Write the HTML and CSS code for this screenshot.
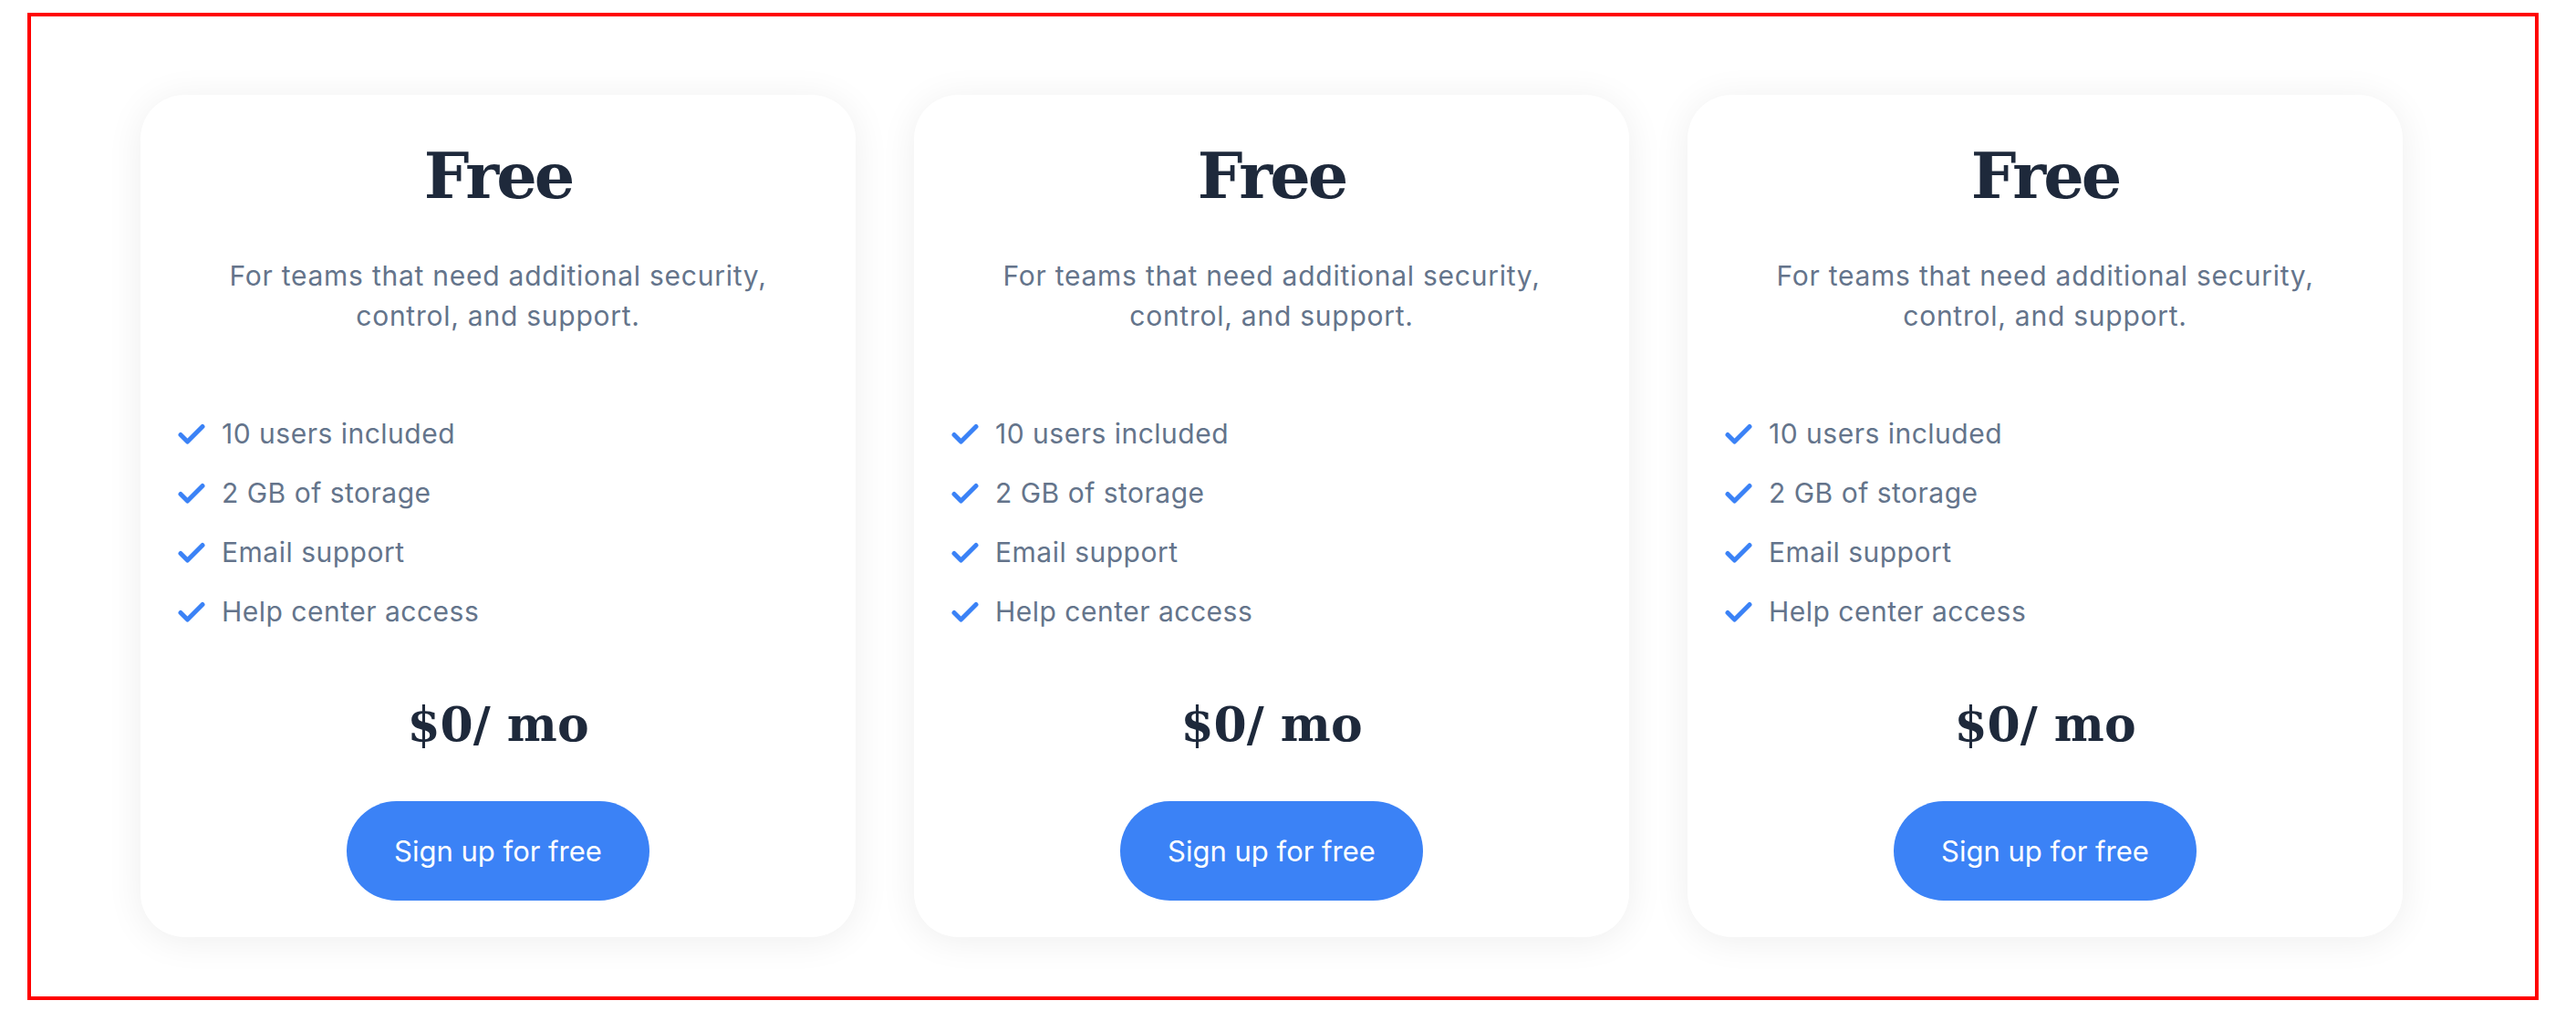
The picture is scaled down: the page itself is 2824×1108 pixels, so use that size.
FILE: index.html
```html
<!DOCTYPE html>
<html lang="en">
<head>
  <meta charset="UTF-8">
  <meta name="viewport" content="width=device-width, initial-scale=1.0">
  <title>Pricing</title>
  <link rel="stylesheet" href="styles.css">
</head>
<body>
  <div class="frame">
    <div class="plans">

      <div class="plan">
        <h2 class="plan-name">Free</h2>
        <p class="plan-desc">For teams that need additional security, control, and support.</p>
        <ul class="features">
          <li class="feature">
            <svg class="check" viewBox="0 0 32 24"><polyline points="4,12.5 11.5,20 28,3.5"/></svg>
            10 users included
          </li>
          <li class="feature">
            <svg class="check" viewBox="0 0 32 24"><polyline points="4,12.5 11.5,20 28,3.5"/></svg>
            2 GB of storage
          </li>
          <li class="feature">
            <svg class="check" viewBox="0 0 32 24"><polyline points="4,12.5 11.5,20 28,3.5"/></svg>
            Email support
          </li>
          <li class="feature">
            <svg class="check" viewBox="0 0 32 24"><polyline points="4,12.5 11.5,20 28,3.5"/></svg>
            Help center access
          </li>
        </ul>
        <div class="price">$0/ mo</div>
        <button class="signup-btn">Sign up for free</button>
      </div>

      <div class="plan">
        <h2 class="plan-name">Free</h2>
        <p class="plan-desc">For teams that need additional security, control, and support.</p>
        <ul class="features">
          <li class="feature">
            <svg class="check" viewBox="0 0 32 24"><polyline points="4,12.5 11.5,20 28,3.5"/></svg>
            10 users included
          </li>
          <li class="feature">
            <svg class="check" viewBox="0 0 32 24"><polyline points="4,12.5 11.5,20 28,3.5"/></svg>
            2 GB of storage
          </li>
          <li class="feature">
            <svg class="check" viewBox="0 0 32 24"><polyline points="4,12.5 11.5,20 28,3.5"/></svg>
            Email support
          </li>
          <li class="feature">
            <svg class="check" viewBox="0 0 32 24"><polyline points="4,12.5 11.5,20 28,3.5"/></svg>
            Help center access
          </li>
        </ul>
        <div class="price">$0/ mo</div>
        <button class="signup-btn">Sign up for free</button>
      </div>

      <div class="plan">
        <h2 class="plan-name">Free</h2>
        <p class="plan-desc">For teams that need additional security, control, and support.</p>
        <ul class="features">
          <li class="feature">
            <svg class="check" viewBox="0 0 32 24"><polyline points="4,12.5 11.5,20 28,3.5"/></svg>
            10 users included
          </li>
          <li class="feature">
            <svg class="check" viewBox="0 0 32 24"><polyline points="4,12.5 11.5,20 28,3.5"/></svg>
            2 GB of storage
          </li>
          <li class="feature">
            <svg class="check" viewBox="0 0 32 24"><polyline points="4,12.5 11.5,20 28,3.5"/></svg>
            Email support
          </li>
          <li class="feature">
            <svg class="check" viewBox="0 0 32 24"><polyline points="4,12.5 11.5,20 28,3.5"/></svg>
            Help center access
          </li>
        </ul>
        <div class="price">$0/ mo</div>
        <button class="signup-btn">Sign up for free</button>
      </div>

    </div>
  </div>
</body>
</html>
```

FILE: styles.css
```css
* {
  margin: 0;
  padding: 0;
  box-sizing: border-box;
}

body {
  background: #fff;
  font-family: Inter, "Noto Sans", sans-serif;
}

.frame {
  margin: 14px 41px 12px 30px;
  height: 1082px;
  border: 4px solid #ff0000;
  padding: 86px 145px 0 120px;
}

.plans {
  display: flex;
  gap: 64px;
}

.plan {
  width: 784px;
  display: flex;
  flex-direction: column;
  align-items: center;
  padding: 49px 40px 40px;
  background: #fff;
  border-radius: 48px;
  box-shadow: 0 4px 40px rgba(0, 0, 0, 0.07);
  text-align: center;
}

.plan-name {
  font-family: "DejaVu Serif", serif;
  font-size: 70px;
  line-height: 80px;
  font-weight: 700;
  letter-spacing: -3px;
  color: #1e293b;
}

.plan-desc {
  max-width: 660px;
  margin-top: 47px;
  font-size: 30px;
  line-height: 44px;
  letter-spacing: 0.75px;
  color: #64748b;
}

.features {
  list-style: none;
  align-self: stretch;
  margin-top: 75px;
  text-align: left;
}

.feature {
  display: flex;
  align-items: center;
  gap: 17px;
  font-size: 30px;
  line-height: 65px;
  letter-spacing: 0.5px;
  color: #64748b;
}

.check {
  width: 32px;
  height: 24px;
  flex-shrink: 0;
  fill: none;
  stroke: #3b82f6;
  stroke-width: 5;
  stroke-linecap: round;
  stroke-linejoin: round;
}

.price {
  margin-top: 59px;
  font-family: "DejaVu Serif", serif;
  font-size: 52px;
  line-height: 64px;
  font-weight: 700;
  color: #1e293b;
}

.signup-btn {
  margin-top: 52px;
  height: 109px;
  padding: 0 52px;
  border: none;
  border-radius: 999px;
  background: #3b82f6;
  color: #fff;
  font-family: Inter, "Noto Sans", sans-serif;
  font-size: 31px;
  cursor: pointer;
}
```
